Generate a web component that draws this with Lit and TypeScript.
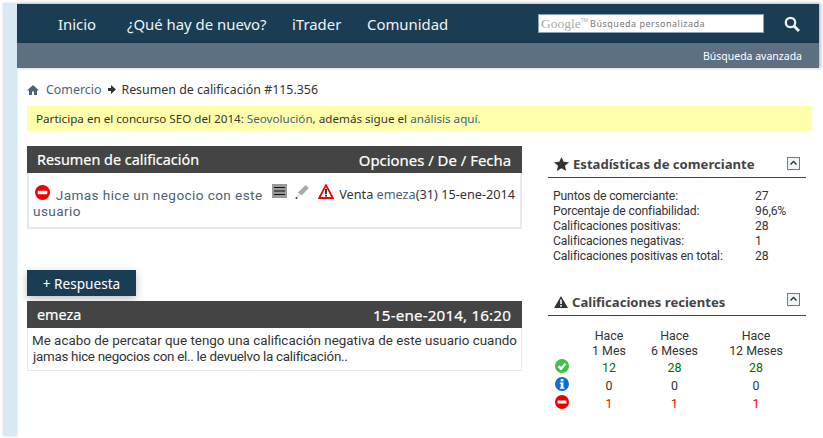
import { LitElement, html, css, svg } from "lit";
import { customElement } from "lit/decorators.js";

const noEntry = svg`<circle cx="7" cy="7" r="7" fill="#ee0000"/><rect x="2.5" y="5.4" width="9" height="3.2" rx=".6" fill="#fff"/>`;
const ok = svg`<circle cx="7" cy="7" r="7" fill="#3fc04a"/><path d="M3.6 7.2l2.4 2.5 4.4-5" fill="none" stroke="#fff" stroke-width="2.4"/>`;
const info = svg`<circle cx="7" cy="7" r="7" fill="#0b6fd6"/><rect x="5.7" y="2" width="2.8" height="2.4" fill="#fff"/><path d="M4.8 5.4h3.6v5h1v1.4H4.8v-1.4h1v-3.6h-1z" fill="#fff"/>`;

const ic = (body: unknown) => html`<svg class="ic14" viewBox="0 0 14 14">${body}</svg>`;

@customElement("app-root")
export class AppRoot extends LitElement {
  static styles = css`
    :host { display: block; width: 823px; height: 438px; overflow: hidden; background: #fff;
      font-family: "Noto Sans", sans-serif; font-size: 12px; color: #333; }
    a { color: #4c6272; text-decoration: none; }
    .notice a { color: #3f5f80; }
    .frame { height: 433px; margin: 3px 4px 2px 3px; display: flex; }
    .strip { width: 14px; background: #d9e9f4; flex: none; box-shadow: 0 0 3px rgba(150,190,220,.45); }
    .page { flex: 1; min-width: 0; display: flex; flex-direction: column; }
    .bar { box-shadow: 2px 0 3px rgba(0,0,0,.25); }
    .nav { height: 40px; background: #1b3d53; border-top: 1px solid #f3c7a0; box-sizing: border-box; display: flex; align-items: center; color: #eef3f6; }
    .menu { display: flex; font-size: 14.9px; margin-left: 41px; width: 480px; white-space: nowrap; }
    .menu span:nth-child(1) { width: 69px; }
    .menu span:nth-child(2) { width: 165px; }
    .menu span:nth-child(3) { width: 75px; }
    .search { width: 226px; height: 19px; box-sizing: border-box; background: #fff; border: 1px solid #8aa3b5; display: flex; align-items: center; color: #777; font-size: 9px; letter-spacing: .5px; overflow: hidden; white-space: nowrap; }
    .g { font-family: "Liberation Serif", serif; color: #aaa; font-size: 13.5px; letter-spacing: 0; margin-left: 2px; }
    .tm { font-size: 5px; letter-spacing: 0; color: #aaa; align-self: flex-start; margin: 2px 2px 0 0; }
    .mag { width: 16px; height: 16px; margin-left: 20px; }
    .sub { height: 25px; background: #5c7082; color: #fff; font-size: 10.5px; display: flex; align-items: center; justify-content: flex-end; padding-right: 17px; }
    .main { padding: 13px 7px 0 10px; flex: 1; }
    .crumb { display: flex; align-items: center; height: 17px; font-size: 12.4px; white-space: nowrap; color: #333; }
    .crumb a { margin: 0 7px 0 7px; }
    .crumb svg { flex: none; }
    .crumb .arrow { margin-right: 5px; }
    .notice { margin-top: 8px; height: 25px; background: #ffffab; display: flex; align-items: center; padding-left: 9px; font-size: 11.65px; color: #333; white-space: nowrap; }
    .cols { display: flex; margin-top: 15px; }
    .left { width: 495px; flex: none; }
    .right { width: 258px; margin-left: 26px; flex: none; }
    .hd { height: 27px; background: #444; color: #fff; display: flex; align-items: center; justify-content: space-between; padding: 0 11px 0 10px; font-size: 14.4px; -webkit-text-stroke: .2px #fff; white-space: nowrap; }
    .hd .wide { font-size: 14.9px; }
    .hd .date { font-size: 15.2px; letter-spacing: .15px; }
    .box { height: 56px; box-sizing: border-box; border: solid #e8e8e8; border-width: 0 2px 2px 2px; padding: 12px 5px 0 4px; display: flex; justify-content: space-between; }
    .title { width: 236px; line-height: 16px; font-family: Roboto, sans-serif; font-size: 13.6px; letter-spacing: .4px; }
    .ic14 { width: 14px; height: 14px; }
    .title .ic14 { width: 15px; height: 15px; vertical-align: 0; margin: 0 2px 0 2px; }
    .meta { display: flex; align-items: flex-start; white-space: nowrap; line-height: 16px; font-size: 12.7px; margin-top: 1px; }
    .meta svg { flex: none; margin: -2px 8px 0 0; }
    .meta .w { margin-right: 5px; }
    .btn { margin-top: 41px; width: 109px; height: 26px; background: #1b3d53; color: #fff; display: flex; align-items: center; justify-content: center; font-size: 13.6px; box-shadow: 0 3px 8px rgba(0,0,0,.25); }
    .post { margin-top: 5px; }
    .msg { box-sizing: border-box; height: 43px; border: solid #e8e8e8; border-width: 0 1px 1px 1px; padding: 5px 4px; line-height: 16px; font-family: Roboto, sans-serif; font-size: 13.4px; color: #333; white-space: nowrap; }
    .msg .l2 { margin-left: 1px; letter-spacing: -.28px; }
    .rt { height: 32px; padding-top: 4px; border-bottom: 1px solid #444; box-sizing: border-box; display: flex; align-items: center; padding-left: 6px; font-size: 13.1px; font-weight: bold; color: #444; position: relative; white-space: nowrap; }
    .rt svg.t { margin-right: 4px; flex: none; }
    .col { position: absolute; right: 6px; top: 11px; width: 13px; height: 13px; }
    .sec2 .col { top: 9px; }
    .rt + .stats { margin-top: 11px; }
    .stats { display: grid; grid-template-columns: 202px auto; padding-left: 5px; line-height: 15px; font-family: Roboto, sans-serif; font-size: 12.2px; letter-spacing: -.15px; color: #333; white-space: nowrap; }
    .sec2 { margin-top: 20px; }
    .tbl { display: grid; grid-template-columns: 36px 50px 81px 82px; margin-top: 13px; text-align: center; line-height: 14.6px; font-family: Roboto, sans-serif; font-size: 12.4px; white-space: nowrap; }
    .tbl .h { padding-bottom: 1px; }
    .tbl .c { height: 18px; line-height: 18px; }
    .tbl .i { text-align: left; padding-left: 7px; height: 18px; }
    .tbl .i svg { margin: 0; display: block; }
    .g1 { color: #006e00; } .r1 { color: #f00; }
  `;

  render() {
    const collapse = html`<svg class="col" viewBox="0 0 13 13"><rect x=".5" y=".5" width="12" height="12" fill="#eef3f6" stroke="#5c7f9f"/><path d="M3.500 7.500l3-3 3 3" fill="none" stroke="#333" stroke-width="1.4"/></svg>`;
    return html`
      <div class="frame">
        <div class="strip"></div>
        <div class="page">
          <div class="nav bar">
            <div class="menu"><span>Inicio</span><span>¿Qué hay de nuevo?</span><span>iTrader</span><span>Comunidad</span></div>
            <div class="search"><span class="g">Google</span><span class="tm">TM</span><span>Búsqueda personalizada</span></div>
            <svg class="mag" viewBox="0 0 16 16"><circle cx="6.500" cy="6.500" r="4.700" fill="none" stroke="#e8eef2" stroke-width="2.300"/><path d="M10 10l5 5" stroke="#e8eef2" stroke-width="3"/></svg>
          </div>
          <div class="sub bar">Búsqueda avanzada</div>
          <div class="main">
            <div class="crumb">
              <svg width="12" height="12" viewBox="0 0 12 12"><path d="M6 1L0 6.500h2V11h3V7.500h2V11h3V6.500h2z" fill="#4c6272"/></svg>
              <a href="#">Comercio</a>
              <svg class="arrow" width="8" height="9" viewBox="0 0 8 9"><path d="M0 3h3V0l5 4.500L3 9V6H0z" fill="#333"/></svg>
              Resumen de calificación #115.356
            </div>
            <div class="notice"><span>Participa en el concurso SEO del 2014: <a href="#">Seovolución</a>, además sigue el <a href="#">análisis aquí.</a></span></div>
            <div class="cols">
              <div class="left">
                <div class="hd"><span>Resumen de calificación</span><span class="wide">Opciones / De / Fecha</span></div>
                <div class="box">
                  <div class="title">${ic(noEntry)} <a href="#">Jamas hice un negocio con este usuario</a></div>
                  <div class="meta">
                    <svg width="15" height="14" viewBox="0 0 15 14"><rect width="15" height="14" fill="#999"/><path d="M2 3.500h11M2 7h11M2 10.500h11" stroke="#111" stroke-width="1.200"/></svg>
                    <svg width="15" height="15" viewBox="0 0 15 15"><path d="M10.500 1l3.500 3-7.500 7.500-3.500-3z" fill="#aaa"/><path d="M3 9.500l2.500 2.500L2 13.500z" fill="#ddd"/><circle cx="1.500" cy="14" r="1" fill="#333"/></svg>
                    <svg class="w" width="16" height="15" viewBox="0 0 16 15"><path d="M8 1.200L1.200 14h13.600z" fill="#fff" stroke="#f00" stroke-width="1.800"/><rect x="7.100" y="5" width="1.800" height="5" fill="#222"/><rect x="7.100" y="10.800" width="1.800" height="1.800" fill="#222"/></svg>
                    <span>Venta <a href="#">emeza</a>(31) 15-ene-2014</span>
                  </div>
                </div>
                <div class="btn">+ Respuesta</div>
                <div class="post">
                  <div class="hd"><span>emeza</span><span class="date">15-ene-2014, 16:20</span></div>
                  <div class="msg">Me acabo de percatar que tengo una calificación negativa de este usuario cuando<br><span class="l2">jamas hice negocios con el.. le devuelvo la calificación..</span></div>
                </div>
              </div>
              <div class="right">
                <div class="rt">
                  <svg class="t" width="15" height="14" viewBox="0 0 15 14"><path d="M7.500 0l2.200 4.800 5.300.5-4 3.500 1.200 5.200-4.700-2.800-4.700 2.800L4 8.800 0 5.300l5.300-.5z" fill="#333"/></svg>
                  Estadísticas de comerciante${collapse}
                </div>
                <div class="stats">
                  <span>Puntos de comerciante:</span><span>27</span>
                  <span>Porcentaje de confiabilidad:</span><span>96,6%</span>
                  <span>Calificaciones positivas:</span><span>28</span>
                  <span>Calificaciones negativas:</span><span>1</span>
                  <span>Calificaciones positivas en total:</span><span>28</span>
                </div>
                <div class="sec2">
                  <div class="rt">
                    <svg class="t" width="14" height="12" viewBox="0 0 14 12"><path d="M7 0l7 12H0z" fill="#333"/><rect x="6.200" y="3.500" width="1.600" height="4.500" fill="#fff"/><rect x="6.200" y="9" width="1.600" height="1.700" fill="#fff"/></svg>
                    Calificaciones recientes${collapse}
                  </div>
                  <div class="tbl">
                    <span></span><span class="h">Hace<br>1 Mes</span><span class="h">Hace<br>6 Meses</span><span class="h">Hace<br>12 Meses</span>
                    <span class="i">${ic(ok)}</span><span class="c g1">12</span><span class="c g1">28</span><span class="c g1">28</span>
                    <span class="i">${ic(info)}</span><span class="c">0</span><span class="c">0</span><span class="c">0</span>
                    <span class="i">${ic(noEntry)}</span><span class="c r1">1</span><span class="c r1">1</span><span class="c r1">1</span>
                  </div>
                </div>
              </div>
            </div>
          </div>
        </div>
      </div>`;
  }
}
